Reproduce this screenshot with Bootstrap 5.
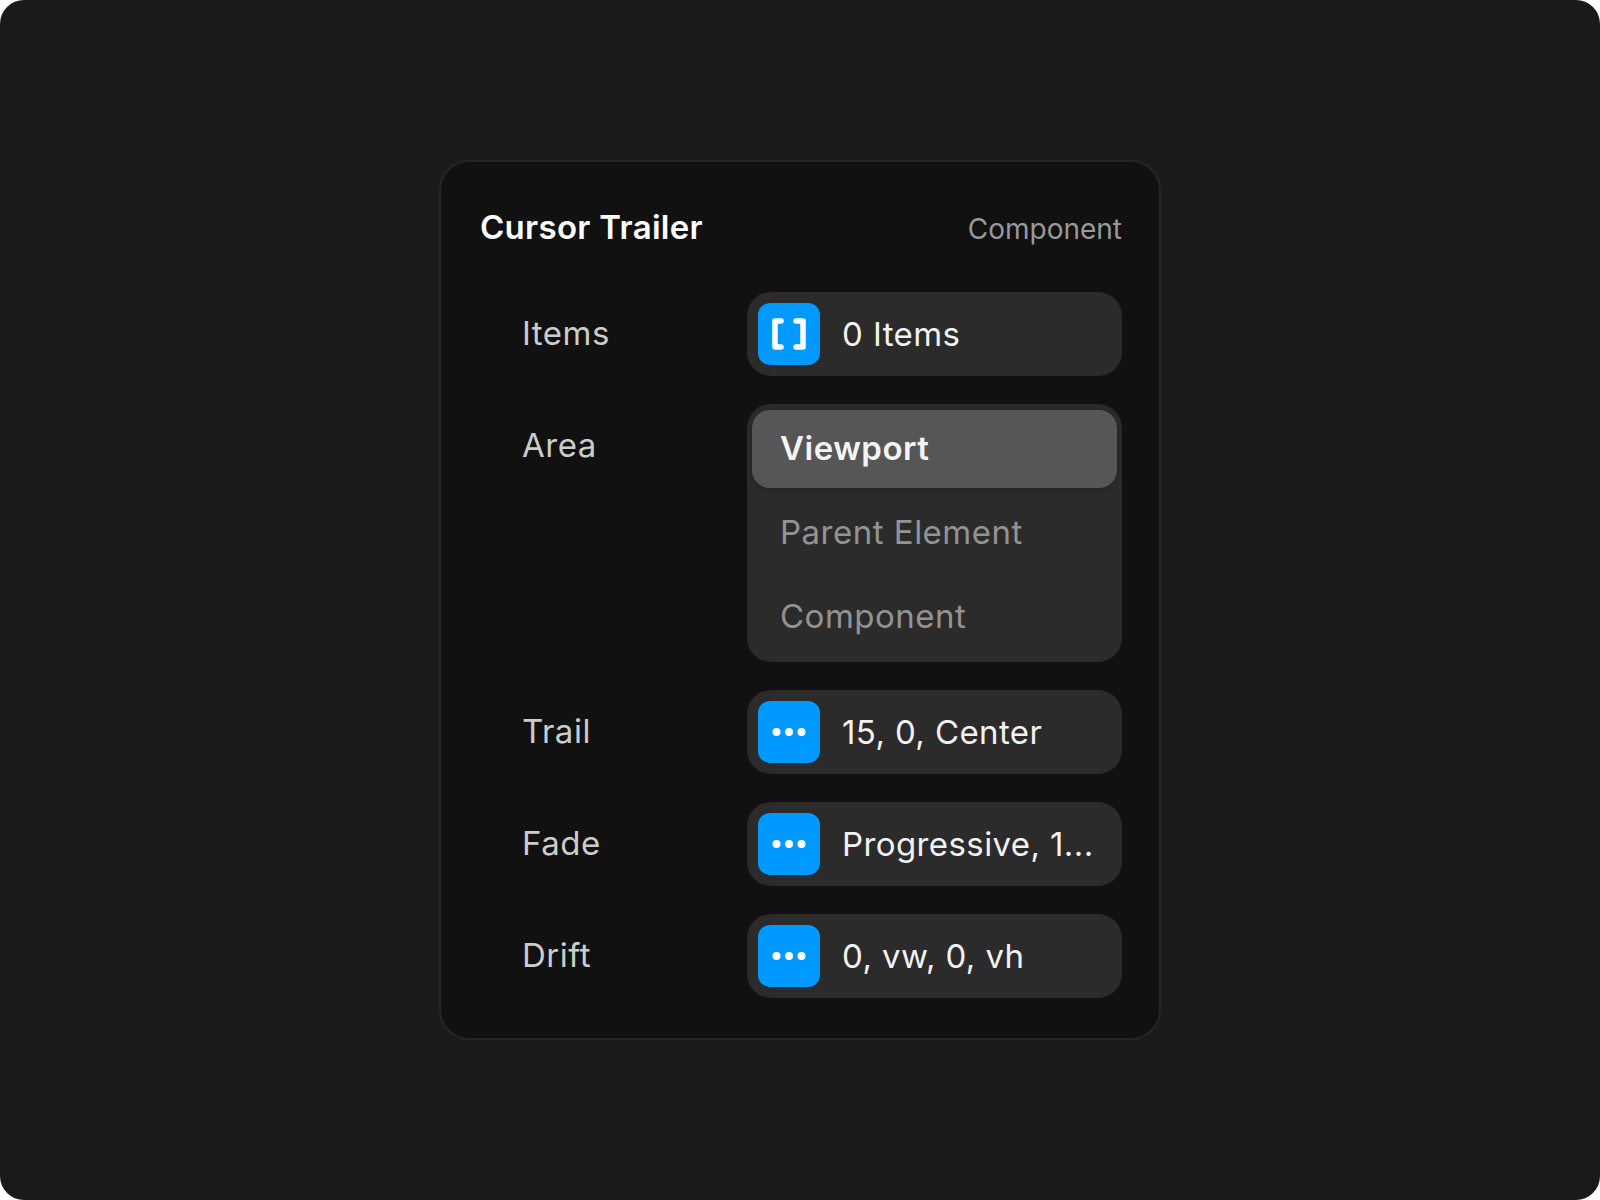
<!DOCTYPE html>
<html lang="en">
<head>
<meta charset="utf-8">
<title>Cursor Trailer</title>
<link href="https://cdn.jsdelivr.net/npm/bootstrap@5.3.0/dist/css/bootstrap.min.css" rel="stylesheet">
<style>
html, body { height: 100%; }
body { background: #fff; margin: 0; font-family: Inter, "Liberation Sans", sans-serif; }
.stage { width: 1600px; height: 1200px; background: #1a1a1a; border-radius: 24px; }
.panel { width: 722px; height: 880px; margin-top: -1px; background: #111; border: 2px solid #262626; border-radius: 30px; padding: 40px 37px 40px 39px; }
.panel-title { font-size: 33px; font-weight: 600; line-height: 48px; color: #fff; letter-spacing: 0.3px; padding-top: 3px; }
.panel-kind { font-size: 28px; line-height: 48px; color: #999; padding-top: 6px; }
.head-row { height: 48px; margin-bottom: 42px; }
.rows { gap: 28px; }
.field-label { width: 267px; padding-left: 42px; padding-bottom: 2px; font-size: 33px; line-height: 40px; color: #ccc; letter-spacing: 0.5px; }
.field-label-top { padding-top: 21px; line-height: 40px; box-sizing: content-box; width: 225px; }
.ctl { width: 375px; height: 84px; background: #2b2b2b; border-radius: 24px; padding: 0 11px; gap: 23px; color: #f2f2f2; font-size: 33px; white-space: nowrap; letter-spacing: 0.4px; }
.ctl span { padding-top: 2px; margin-left: -1px; }
.ico { width: 62px; height: 62px; background: #0099ff; border-radius: 12px; }
.seg { width: 375px; height: 258px; background: #2b2b2b; border-radius: 24px; padding: 6px 5px; }
.seg-item { height: 78px; padding-left: 28px; font-size: 33px; color: #939393; border-radius: 18px; letter-spacing: 0.5px; }
.seg-item-on { background: #565656; color: #f4f4f4; font-weight: 600; margin-bottom: 6px; box-shadow: 0 2px 6px rgba(0,0,0,.15); }
.seg-item-mid { margin-bottom: 6px; }
</style>
</head>
<body>
<div class="stage d-flex align-items-center justify-content-center">
  <div class="panel">
    <div class="head-row d-flex justify-content-between align-items-center">
      <div class="panel-title">Cursor Trailer</div>
      <div class="panel-kind">Component</div>
    </div>
    <div class="rows d-flex flex-column">
      <div class="d-flex align-items-center">
        <div class="field-label">Items</div>
        <div class="ctl d-flex align-items-center">
          <div class="ico d-flex align-items-center justify-content-center">
            <svg width="62" height="62" viewBox="0 0 62 62" fill="none" stroke="#fff" stroke-width="5.5" stroke-linecap="round" stroke-linejoin="round"><path d="M23 18h-6v26h6M38 18h7v26h-7"/></svg>
          </div>
          <span>0 Items</span>
        </div>
      </div>
      <div class="d-flex align-items-start">
        <div class="field-label field-label-top">Area</div>
        <div class="seg">
          <div class="seg-item seg-item-on d-flex align-items-center">Viewport</div>
          <div class="seg-item seg-item-mid d-flex align-items-center">Parent Element</div>
          <div class="seg-item d-flex align-items-center">Component</div>
        </div>
      </div>
      <div class="d-flex align-items-center">
        <div class="field-label">Trail</div>
        <div class="ctl d-flex align-items-center">
          <div class="ico d-flex align-items-center justify-content-center">
            <svg width="62" height="62" viewBox="0 0 62 62" fill="#fff"><circle cx="18.5" cy="31" r="4"/><circle cx="31" cy="31" r="4"/><circle cx="43.5" cy="31" r="4"/></svg>
          </div>
          <span>15, 0, Center</span>
        </div>
      </div>
      <div class="d-flex align-items-center">
        <div class="field-label">Fade</div>
        <div class="ctl d-flex align-items-center">
          <div class="ico d-flex align-items-center justify-content-center">
            <svg width="62" height="62" viewBox="0 0 62 62" fill="#fff"><circle cx="18.5" cy="31" r="4"/><circle cx="31" cy="31" r="4"/><circle cx="43.5" cy="31" r="4"/></svg>
          </div>
          <span>Progressive, 1...</span>
        </div>
      </div>
      <div class="d-flex align-items-center">
        <div class="field-label">Drift</div>
        <div class="ctl d-flex align-items-center">
          <div class="ico d-flex align-items-center justify-content-center">
            <svg width="62" height="62" viewBox="0 0 62 62" fill="#fff"><circle cx="18.5" cy="31" r="4"/><circle cx="31" cy="31" r="4"/><circle cx="43.5" cy="31" r="4"/></svg>
          </div>
          <span>0, vw, 0, vh</span>
        </div>
      </div>
    </div>
  </div>
</div>
<script src="https://cdn.jsdelivr.net/npm/bootstrap@5.3.0/dist/js/bootstrap.bundle.min.js"></script>
</body>
</html>
